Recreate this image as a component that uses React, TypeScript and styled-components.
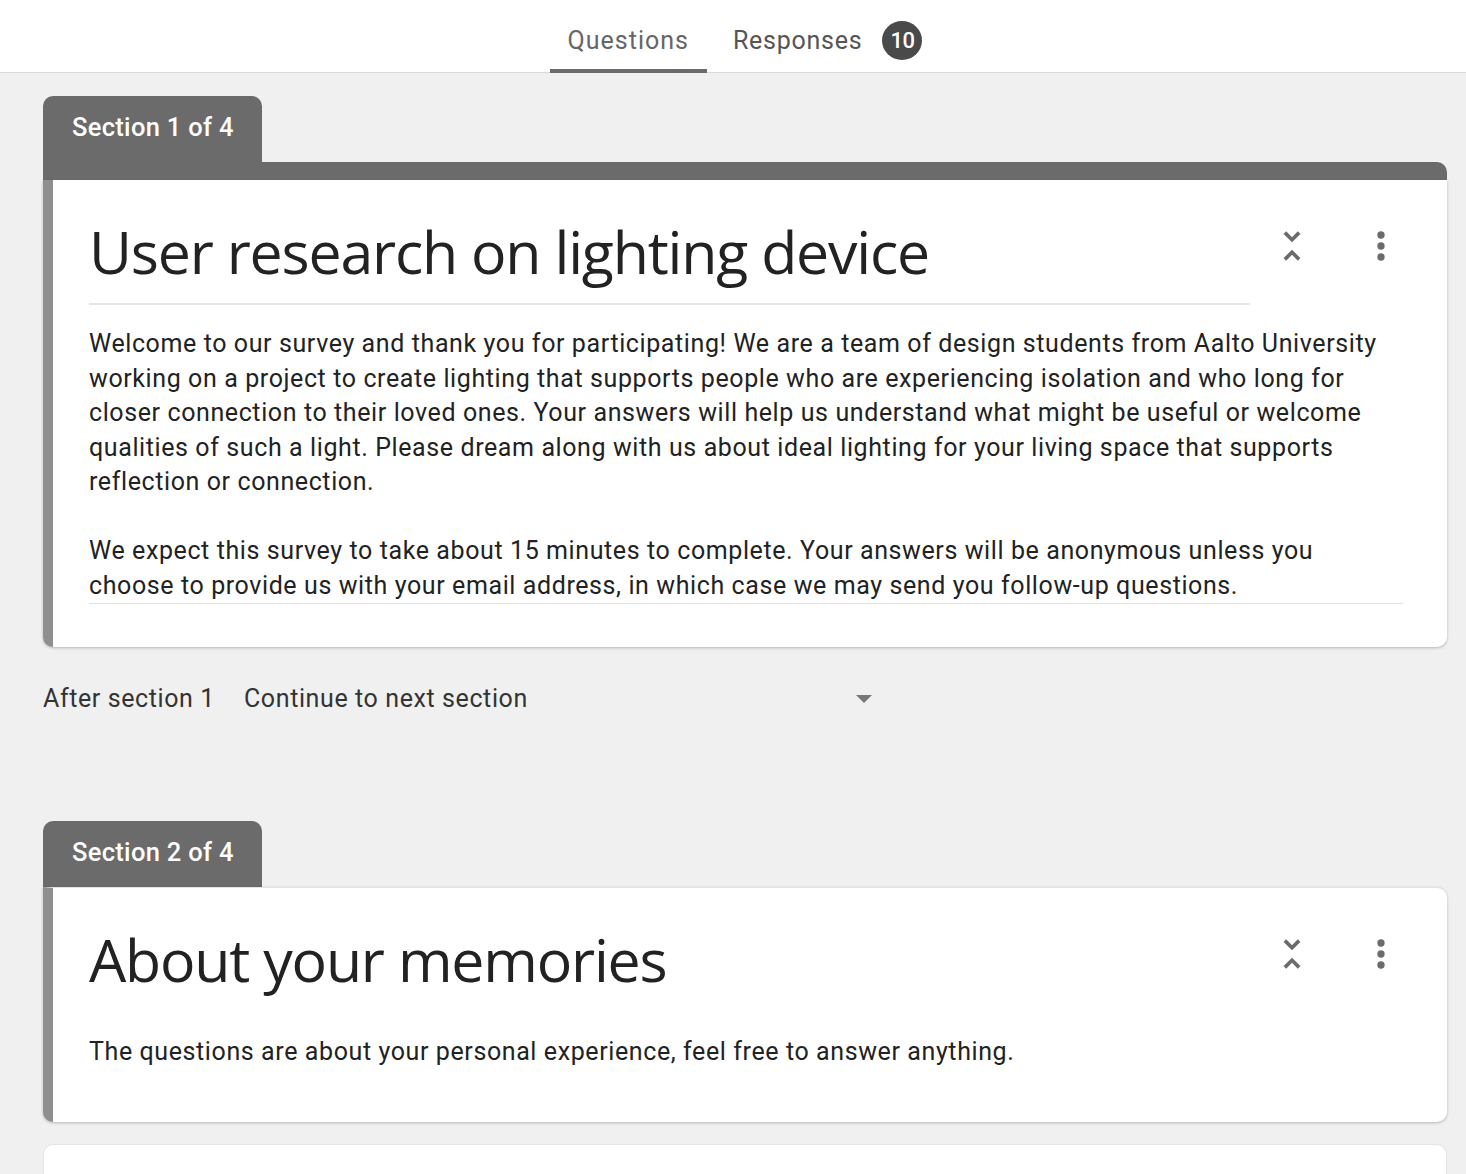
import React from "react";
import styled, { createGlobalStyle } from "styled-components";

const Global = createGlobalStyle`
  html, body { margin: 0; padding: 0; background: #f0f0f0; }
  body { font-family: Roboto, "Liberation Sans", sans-serif; color: #202124; }
`;

const Header = styled.header`
  height: 73px;
  box-sizing: border-box;
  padding-top: 8px;
  background: #ffffff;
  border-bottom: 1px solid #dadada;
  display: flex;
  justify-content: center;
  align-items: stretch;
`;

const TabGroup = styled.nav`
  display: flex;
  align-items: stretch;
  gap: 8px;
  margin-left: 24px;
`;

const Tab = styled.div<{ $active?: boolean }>`
  position: relative;
  display: flex;
  align-items: center;
  gap: 20px;
  padding: 0 18px;
  font-size: 25px;
  letter-spacing: 1px;
  color: ${(p) => (p.$active ? "#666666" : "#555555")};
  &::after {
    content: "";
    position: absolute;
    left: 0;
    right: 0;
    bottom: -1px;
    height: 4px;
    background: ${(p) => (p.$active ? "#6b6b6b" : "transparent")};
  }
`;

const TabLabel = styled.span<{ $tight?: boolean }>`
  letter-spacing: ${(p) => (p.$tight ? "0.75px" : "1px")};
`;

const Badge = styled.span`
  width: 40px;
  height: 39px;
  border-radius: 50%;
  background: #4a4a4a;
  color: #ffffff;
  font-size: 22px;
  font-weight: 500;
  display: inline-flex;
  align-items: center;
  justify-content: center;
  letter-spacing: -0.5px;
`;

const Main = styled.main`
  padding: 23px 19px 0 43px;
  display: flex;
  flex-direction: column;
`;

const SectionTab = styled.div`
  align-self: flex-start;
  width: 219px;
  height: 66px;
  box-sizing: border-box;
  background: #6b6b6b;
  color: #ffffff;
  border-radius: 10px 10px 0 0;
  font-size: 25.5px;
  letter-spacing: 0.3px;
  font-weight: 500;
  padding: 16px 0 0 29px;
`;

const TopBar = styled.div`
  height: 18px;
  background: #6b6b6b;
  border-radius: 0 10px 0 0;
`;

const Card = styled.section<{ $attached?: boolean }>`
  background: #ffffff;
  border-left: 10px solid #8f8f8f;
  border-top: ${(p) => (p.$attached ? "none" : "1px solid #e4e4e4")};
  border-radius: ${(p) => (p.$attached ? "0 0 10px 10px" : "0 10px 10px 10px")};
  box-shadow: 0 1px 3px rgba(0, 0, 0, 0.25);
  padding: 0 44px 0 36px;
`;

const TitleRow = styled.div`
  display: flex;
  align-items: flex-start;
`;

const Title = styled.h1<{ $underline?: boolean }>`
  flex: 1;
  margin: 0;
  font-family: "Open Sans", Roboto, sans-serif;
  font-weight: 400;
  font-size: 59px;
  letter-spacing: -1.2px;
  color: #222222;
  line-height: 76px;
  padding-top: 33px;
  padding-bottom: 14px;
  border-bottom: 2px solid ${(p) => (p.$underline ? "#e6e6e6" : "transparent")};
`;

const Icons = styled.div`
  display: flex;
  align-items: center;
  gap: 45px;
  padding-top: 44px;
  margin-left: 20px;
`;

const IconSvg = styled.svg`
  width: 44px;
  height: 44px;
  fill: #6b6b6b;
  display: block;
`;

const Description = styled.div<{ $underline?: boolean }>`
  font-size: 25px;
  line-height: 34.5px;
  color: #222222;
  letter-spacing: 0.6px;
  border-bottom: 1px solid ${(p) => (p.$underline ? "#e0e0e0" : "transparent")};
  p { margin: 0; }
`;

const CardBody = styled.div`
  padding-top: 22px;
`;

const CardBottom = styled.div<{ $h: number }>`
  height: ${(p) => p.$h}px;
`;

const AfterRow = styled.div`
  display: flex;
  align-items: center;
  height: 52px;
  margin-top: 25px;
  font-size: 25px;
  color: #333333;
  letter-spacing: 0.6px;
`;

const AfterLabel = styled.span`
  width: 201px;
`;

const Select = styled.div`
  display: flex;
  align-items: center;
  justify-content: space-between;
  width: 632px;
`;

const Caret = styled.span`
  width: 0;
  height: 0;
  border-left: 8.5px solid transparent;
  border-right: 8.5px solid transparent;
  border-top: 8px solid #777777;
  margin-right: 4px;
  margin-top: 2px;
`;

const Spacer = styled.div<{ $h: number }>`
  height: ${(p) => p.$h}px;
`;

const NextCard = styled.div`
  height: 40px;
  background: #ffffff;
  border-radius: 10px 10px 0 0;
  border: 1px solid #e4e4e4;
  border-bottom: none;
`;

function CollapseIcon() {
  return (
    <IconSvg viewBox="0 0 24 24">
      <path d="M7.41 18.59L8.83 20 12 16.83 15.17 20l1.41-1.41L12 14l-4.59 4.59zm9.18-13.18L15.17 4 12 7.17 8.83 4 7.41 5.41 12 10l4.59-4.59z" />
    </IconSvg>
  );
}

function MoreIcon() {
  return (
    <IconSvg viewBox="0 0 24 24">
      <circle cx="12" cy="6" r="2" />
      <circle cx="12" cy="12" r="2" />
      <circle cx="12" cy="18" r="2" />
    </IconSvg>
  );
}

export default function App() {
  return (
    <>
      <Global />
      <Header>
        <TabGroup>
          <Tab $active>
            <TabLabel>Questions</TabLabel>
          </Tab>
          <Tab>
            <TabLabel $tight>Responses</TabLabel>
            <Badge>10</Badge>
          </Tab>
        </TabGroup>
      </Header>
      <Main>
        <SectionTab>Section 1 of 4</SectionTab>
        <TopBar />
        <Card $attached>
          <TitleRow>
            <Title $underline>User research on lighting device</Title>
            <Icons>
              <CollapseIcon />
              <MoreIcon />
            </Icons>
          </TitleRow>
          <CardBody>
            <Description $underline>
              <p>
                Welcome to our survey and thank you for participating! We are a team of design students from Aalto University
                working on a project to create lighting that supports people who are experiencing isolation and who long for
                closer connection to their loved ones. Your answers will help us understand what might be useful or welcome
                qualities of such a light. Please dream along with us about ideal lighting for your living space that supports
                reflection or connection.
              </p>
              <p>&nbsp;</p>
              <p>
                We expect this survey to take about 15 minutes to complete. Your answers will be anonymous unless you choose
                to provide us with your email address, in which case we may send you follow-up questions.
              </p>
            </Description>
          </CardBody>
          <CardBottom $h={43} />
        </Card>
        <AfterRow>
          <AfterLabel>After section 1</AfterLabel>
          <Select>
            <span>Continue to next section</span>
            <Caret />
          </Select>
        </AfterRow>
        <Spacer $h={97} />
        <SectionTab>Section 2 of 4</SectionTab>
        <Card>
          <TitleRow>
            <Title>About your memories</Title>
            <Icons>
              <CollapseIcon />
              <MoreIcon />
            </Icons>
          </TitleRow>
          <CardBody>
            <Description>
              The questions are about your personal experience, feel free to answer anything.
            </Description>
          </CardBody>
          <CardBottom $h={51} />
        </Card>
        <Spacer $h={22} />
        <NextCard />
      </Main>
    </>
  );
}
